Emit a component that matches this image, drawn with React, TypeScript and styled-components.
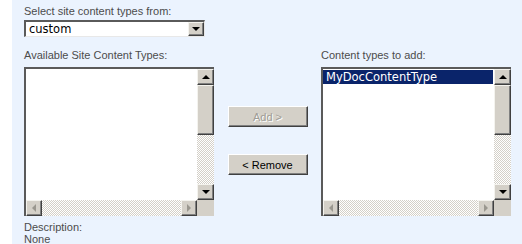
import styled, { createGlobalStyle } from "styled-components";

const GlobalStyle = createGlobalStyle`
  html, body {
    margin: 0;
    padding: 0;
    background: #ffffff;
  }
`;

const Page = styled.div`
  width: 522px;
  height: 244px;
  padding-left: 12px;
  box-sizing: border-box;
  overflow: hidden;
  font-family: "Liberation Sans", Arial, sans-serif;
`;

// Light blue form section.
const Panel = styled.div`
  background: #ebf3fe;
  height: 100%;
  padding: 5px 0 0 12px;
  box-sizing: border-box;
`;

const Label = styled.div`
  font-size: 11px;
  line-height: 12px;
  color: #4c4c4c;
  white-space: nowrap;
`;

// Classic sunken border.
const Sunken = styled.div`
  border-style: solid;
  border-width: 2px 1px 1px 2px;
  border-color: #5a5a5a #e8e8e8 #e8e8e8 #5a5a5a;
  box-sizing: border-box;
  background: #fff;
`;

const Select = styled(Sunken)`
  margin-top: 3px;
  width: 181px;
  height: 17px;
  display: flex;
  align-items: center;
  justify-content: space-between;
  font-family: "DejaVu Sans", sans-serif;
  font-size: 11.5px;
  color: #000;
  padding-left: 3px;
`;

const SelectValue = styled.span`
  line-height: 14px;
`;

// Scrollbar/dropdown button with a triangle.
const ArrowButton = styled.div<{ $w?: number; $h?: number }>`
  width: ${(p) => p.$w ?? 16}px;
  height: ${(p) => p.$h ?? 16}px;
  box-sizing: border-box;
  background: #d4d0c8;
  border-style: solid;
  border-width: 1px;
  border-color: #f4f3ee #404040 #404040 #f4f3ee;
  box-shadow: inset -1px -1px 0 #808080;
  display: flex;
  align-items: center;
  justify-content: center;
  flex-shrink: 0;
`;

const Tri = styled.div<{ $dir: "up" | "down" | "left" | "right"; $off?: boolean }>`
  width: 0;
  height: 0;
  ${(p) => {
    const c = p.$off ? "#9a978f" : "#000";
    switch (p.$dir) {
      case "up":
        return `border-left:4px solid transparent;border-right:4px solid transparent;border-bottom:4px solid ${c};`;
      case "down":
        return `border-left:4px solid transparent;border-right:4px solid transparent;border-top:4px solid ${c};`;
      case "left":
        return `border-top:4px solid transparent;border-bottom:4px solid transparent;border-right:4px solid ${c};`;
      default:
        return `border-top:4px solid transparent;border-bottom:4px solid transparent;border-left:4px solid ${c};`;
    }
  }}
`;

const Columns = styled.div`
  margin-top: 12px;
  display: grid;
  grid-template-columns: 190px 107px 190px;
`;

const Column = styled.div`
  display: flex;
  flex-direction: column;
  gap: 6px;
`;

const Middle = styled.div`
  display: flex;
  flex-direction: column;
  align-items: center;
  padding-top: 57px;
  gap: 27px;
`;

const ListBox = styled(Sunken)`
  width: 190px;
  height: 149px;
  display: grid;
  grid-template-columns: 1fr 17px;
  grid-template-rows: 1fr 16px;
  border-width: 2px 0 0 2px;
`;

const ListItems = styled.div`
  padding: 1px 1px 0 0;
  overflow: hidden;
`;

const ListItem = styled.div<{ $selected?: boolean }>`
  font-family: "DejaVu Sans", sans-serif;
  font-size: 11.5px;
  line-height: 14px;
  padding-left: 3px;
  background: ${(p) => (p.$selected ? "#0a246a" : "transparent")};
  color: ${(p) => (p.$selected ? "#fff" : "#000")};
`;

const Track = styled.div<{ $horizontal?: boolean }>`
  display: flex;
  flex-direction: ${(p) => (p.$horizontal ? "row" : "column")};
  justify-content: space-between;
  background: repeating-conic-gradient(#d4d0c8 0 25%, #ffffff 0 50%) 0 0 / 2px 2px;
`;

const VTrack = styled(Track)`
  justify-content: flex-start;
`;

const Thumb = styled(ArrowButton)`
  height: 50px;
`;

const Spacer = styled.div`
  flex: 1;
`;

const Corner = styled.div`
  background: #d4d0c8;
`;

const Button = styled.div<{ $disabled?: boolean }>`
  width: 80px;
  height: 21px;
  box-sizing: border-box;
  background: #d4d0c8;
  border-style: solid;
  border-width: 1px;
  border-color: #ffffff #404040 #404040 #ffffff;
  box-shadow: inset -1px -1px 0 #808080;
  display: flex;
  align-items: center;
  justify-content: center;
  font-size: 11px;
  color: ${(p) => (p.$disabled ? "#a09d96" : "#000")};
  text-shadow: ${(p) => (p.$disabled ? "1px 1px 0 #ffffff" : "none")};
`;

const Description = styled.div`
  margin-top: 5px;
`;

function ScrollList({ items }: { items: { text: string; selected?: boolean }[] }) {
  return (
    <ListBox>
      <ListItems>
        {items.map((it) => (
          <ListItem key={it.text} $selected={it.selected}>
            {it.text}
          </ListItem>
        ))}
      </ListItems>
      <VTrack>
        <ArrowButton $w={17}>
          <Tri $dir="up" />
        </ArrowButton>
        <Thumb $w={17} />
        <Spacer />
        <ArrowButton $w={17}>
          <Tri $dir="down" />
        </ArrowButton>
      </VTrack>
      <Track $horizontal>
        <ArrowButton>
          <Tri $dir="left" $off />
        </ArrowButton>
        <ArrowButton>
          <Tri $dir="right" $off />
        </ArrowButton>
      </Track>
      <Corner />
    </ListBox>
  );
}

export default function App() {
  return (
    <Page>
      <GlobalStyle />
      <Panel>
        <Label>Select site content types from:</Label>
        <Select>
          <SelectValue>custom</SelectValue>
          <ArrowButton $w={16} $h={14}>
            <Tri $dir="down" />
          </ArrowButton>
        </Select>
        <Columns>
          <Column>
            <Label>Available Site Content Types:</Label>
            <ScrollList items={[]} />
          </Column>
          <Middle>
            <Button $disabled>Add &gt;</Button>
            <Button>&lt; Remove</Button>
          </Middle>
          <Column>
            <Label>Content types to add:</Label>
            <ScrollList items={[{ text: "MyDocContentType", selected: true }]} />
          </Column>
        </Columns>
        <Description>
          <Label>Description:</Label>
          <Label>None</Label>
        </Description>
      </Panel>
    </Page>
  );
}
